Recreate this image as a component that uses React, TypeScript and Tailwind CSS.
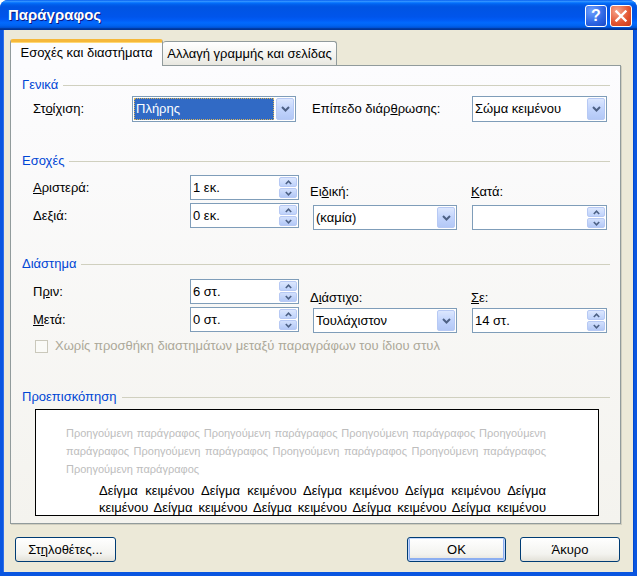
import type { ReactNode } from "react";

const font = "font-['Liberation_Sans',Arial,sans-serif]";

function Chevron() {
  return (
    <svg width="9" height="6" viewBox="0 0 9 6">
      <path d="M1 1 L4.5 4.5 L8 1" fill="none" stroke="#4D6185" strokeWidth="2" />
    </svg>
  );
}

function DropBtn() {
  return (
    <div className="m-px flex w-[18px] items-center justify-center rounded-[2px] border border-[#B7C9F4] bg-[linear-gradient(to_bottom,#DCE7FE,#C2D4FC_50%,#B3C8F6)]">
      <Chevron />
    </div>
  );
}

function SpinBtns() {
  return (
    <div className="m-px flex w-[18px] flex-col gap-px">
      <div className="flex flex-1 items-center justify-center rounded-[2px] border border-[#B7C9F4] bg-[linear-gradient(to_bottom,#DCE7FE,#BED2FB)]">
        <svg width="7" height="5" viewBox="0 0 7 5">
          <path d="M0.8 4 L3.5 1.2 L6.2 4" fill="none" stroke="#4D6185" strokeWidth="1.6" />
        </svg>
      </div>
      <div className="flex flex-1 items-center justify-center rounded-[2px] border border-[#B7C9F4] bg-[linear-gradient(to_bottom,#D2E0FD,#B3C8F6)]">
        <svg width="7" height="5" viewBox="0 0 7 5">
          <path d="M0.8 1 L3.5 3.8 L6.2 1" fill="none" stroke="#4D6185" strokeWidth="1.6" />
        </svg>
      </div>
    </div>
  );
}

function Combo({ value, w, h = "h-[25px]" }: { value: string; w: string; h?: string }) {
  return (
    <div className={`flex ${w} ${h} border border-[#7F9DB9] bg-white`}>
      <div className="flex flex-1 items-center pl-[2px] text-[13px]">{value}</div>
      <DropBtn />
    </div>
  );
}

function Spin({ value, w }: { value: string; w: string }) {
  return (
    <div className={`flex ${w} h-[25px] border border-[#7F9DB9] bg-white`}>
      <div className="flex flex-1 items-center pl-[2px] text-[13px]">{value}</div>
      <SpinBtns />
    </div>
  );
}

function Header({ children }: { children: ReactNode }) {
  return (
    <div className="flex h-[14px] items-center">
      <span className="text-[13px] leading-[14px] text-[#0046D5]">{children}</span>
      <div className="ml-[5px] h-px flex-1 bg-[#D0D0BF]" />
    </div>
  );
}

function XPButton({ children, w, isDefault }: { children: ReactNode; w: string; isDefault?: boolean }) {
  return (
    <div
      className={`flex h-[25px] ${w} items-center justify-center rounded-[3px] border border-[#003C74] bg-[linear-gradient(to_bottom,#FFFFFF,#F3F3EF_70%,#E3E1D8)] text-[13px] ${
        isDefault ? "shadow-[inset_0_0_0_1px_#C5D8FC,inset_0_-1px_0_2px_#8CAEF0]" : ""
      }`}
    >
      {children}
    </div>
  );
}

export default function App() {
  return (
    <div className={`${font} flex h-[576px] w-[637px] flex-col overflow-hidden rounded-t-[8px] bg-[#0A56E0] text-black`}>
      {/* title bar */}
      <div className="flex h-[30px] items-center justify-between bg-[linear-gradient(to_bottom,#0058EE_0%,#3593FF_4%,#288EFF_6%,#127DFF_8%,#036FFC_10%,#0262EE_14%,#0057E5_20%,#0054E3_24%,#0055EB_56%,#005BF5_66%,#026AFE_76%,#0062EF_86%,#0052D6_92%,#0040AB_94%,#003092_100%)] pl-[8px] pr-[5px]">
        <span className="text-[15px] font-bold text-white [text-shadow:1px_1px_0_#0A1883]">Παράγραφος</span>
        <div className="flex gap-[3px] pt-px">
          <div className="flex h-[22px] w-[22px] items-center justify-center rounded-[3px] border border-white bg-[radial-gradient(circle_at_30%_25%,#6FA0FF,#2C64E3_60%,#1A48C6)] text-[16px] font-bold leading-none text-white">
            ?
          </div>
          <div className="flex h-[22px] w-[22px] items-center justify-center rounded-[3px] border border-white bg-[radial-gradient(circle_at_30%_25%,#F7A68D,#E2532F_60%,#C8391B)]">
            <svg width="12" height="12" viewBox="0 0 12 12">
              <path d="M1.5 1.5 L10.5 10.5 M10.5 1.5 L1.5 10.5" stroke="white" strokeWidth="2.4" strokeLinecap="square" />
            </svg>
          </div>
        </div>
      </div>

      {/* client area */}
      <div className="mx-[4px] mb-[4px] flex flex-1 flex-col bg-[#ECE9D8] shadow-[-1px_0_0_#2F6FEA,1px_0_0_#0048D0]">
        {/* tabs */}
        <div className="flex h-[35px] items-end pl-[6px]">
          <div className="relative z-10 -mb-px flex h-[27px] w-[153px] items-center justify-center rounded-t-[3px] border-x border-t-[3px] border-x-[#919B9C] border-t-[#F6B83A] bg-[#FCFCFE] pb-[2px] text-[13px] shadow-[inset_0_1px_0_#FFD875]">
            Εσοχές και διαστήματα
          </div>
          <div className="flex h-[24px] w-[174px] items-center justify-center rounded-t-[3px] border-r border-t border-[#919B9C] bg-[linear-gradient(to_bottom,#FFFFFF,#F3F3EF_60%,#E8E7E0)] text-[13px]">
            Αλλαγή γραμμής και σελίδας
          </div>
        </div>

        {/* tab page */}
        <div className="ml-[6px] mr-[12px] flex h-[459px] flex-col border border-[#919B9C] bg-[linear-gradient(to_bottom,#FCFCFE,#F4F3EE)] pl-[11px] pr-[10px] pt-[12px] shadow-[1px_1px_0_#D0CEBF]">
          <Header>Γενικά</Header>
          <div className="mt-[4px] flex h-[26px] items-center pl-[11px] text-[13px]">
            <div className="w-[99px]">
              Στ<u>ο</u>ίχιση:
            </div>
            <div className="flex h-[26px] w-[164px] border border-[#7F9DB9] bg-white">
              <div className="m-px flex flex-1 items-center border border-dotted border-[#D9B45A] bg-[#316AC5] pl-px text-white">
                Πλήρης
              </div>
              <DropBtn />
            </div>
            <div className="ml-[16px] w-[160px]">
              Επίπεδο διάρ<u>θ</u>ρωσης:
            </div>
            <Combo value="Σώμα κειμένου" w="w-[135px]" h="h-[26px]" />
          </div>

          <div className="mt-[32px]">
            <Header>Εσοχές</Header>
          </div>
          <div className="mt-[7px] flex pl-[11px] text-[13px]">
            <div className="flex flex-col gap-[3px]">
              <div className="flex items-center">
                <div className="w-[157px]">
                  <u>Α</u>ριστερά:
                </div>
                <Spin value="1 εκ." w="w-[109px]" />
              </div>
              <div className="flex items-center">
                <div className="w-[157px]">Δεξιά:</div>
                <Spin value="0 εκ." w="w-[109px]" />
              </div>
            </div>
            <div className="ml-[11px] flex w-[147px] flex-col pt-[10px]">
              <div className="h-[14px] leading-[14px]">
                Ει<u>δ</u>ική:
              </div>
              <div className="ml-[3px] mt-[6px]">
                <Combo value="(καμία)" w="w-[144px]" />
              </div>
            </div>
            <div className="ml-[14px] flex flex-col pt-[10px]">
              <div className="h-[14px] leading-[14px]">
                <u>Κ</u>ατά:
              </div>
              <div className="ml-px mt-[6px]">
                <Spin value="" w="w-[135px]" />
              </div>
            </div>
          </div>

          <div className="mt-[27px]">
            <Header>Διάστημα</Header>
          </div>
          <div className="mt-[8px] flex pl-[11px] text-[13px]">
            <div className="flex flex-col gap-[3px]">
              <div className="flex items-center">
                <div className="w-[157px]">
                  Π<u>ρ</u>ιν:
                </div>
                <Spin value="6 στ." w="w-[109px]" />
              </div>
              <div className="flex items-center">
                <div className="w-[157px]">
                  <u>Μ</u>ετά:
                </div>
                <Spin value="0 στ." w="w-[109px]" />
              </div>
            </div>
            <div className="ml-[11px] flex w-[147px] flex-col pt-[12px]">
              <div className="h-[14px] leading-[14px]">
                Δ<u>ι</u>άστιχο:
              </div>
              <div className="ml-[3px] mt-[3px]">
                <Combo value="Τουλάχιστον" w="w-[144px]" />
              </div>
            </div>
            <div className="ml-[14px] flex flex-col pt-[12px]">
              <div className="h-[14px] leading-[14px]">
                <u>Σ</u>ε:
              </div>
              <div className="ml-px mt-[3px]">
                <Spin value="14 στ." w="w-[135px]" />
              </div>
            </div>
          </div>
          <div className="mt-[6px] flex h-[14px] items-center pl-[13px] text-[13px] text-[#ACA899]">
            <div className="h-[13px] w-[13px] border border-[#CAC8BB] bg-[#FAFAF7]" />
            <span className="ml-[7px]">Χωρίς προσθήκη διαστημάτων μεταξύ παραγράφων του ίδιου στυλ</span>
          </div>

          <div className="mt-[37px]">
            <Header>Προεπισκόπηση</Header>
          </div>
          <div className="ml-[13px] mt-[5px] h-[107px] w-[564px] overflow-hidden border border-black bg-white pt-[14px]">
            <div className="pl-[30px] pr-[52px] text-[11px] leading-[18px] text-[#BDBDBD]">
              <div className="text-justify [text-align-last:justify]">
                Προηγούμενη παράγραφος Προηγούμενη παράγραφος Προηγούμενη παράγραφος Προηγούμενη
              </div>
              <div className="text-justify [text-align-last:justify]">
                παράγραφος Προηγούμενη παράγραφος Προηγούμενη παράγραφος Προηγούμενη παράγραφος
              </div>
              <div>Προηγούμενη παράγραφος</div>
            </div>
            <div className="mt-[4px] pl-[63px] pr-[52px] text-[13px] leading-[17px]">
              <div className="text-justify [text-align-last:justify]">
                Δείγμα κειμένου Δείγμα κειμένου Δείγμα κειμένου Δείγμα κειμένου Δείγμα
              </div>
              <div className="text-justify [text-align-last:justify]">
                κειμένου Δείγμα κειμένου Δείγμα κειμένου Δείγμα κειμένου Δείγμα κειμένου
              </div>
            </div>
          </div>
        </div>

        {/* buttons */}
        <div className="mt-[13px] flex pl-[11px] pr-[13px]">
          <XPButton w="w-[101px]">
            Στ<u>η</u>λοθέτες...
          </XPButton>
          <div className="flex-1" />
          <XPButton w="w-[99px]" isDefault>
            OK
          </XPButton>
          <div className="w-[14px]" />
          <XPButton w="w-[100px]">Άκυρο</XPButton>
        </div>
      </div>
    </div>
  );
}
